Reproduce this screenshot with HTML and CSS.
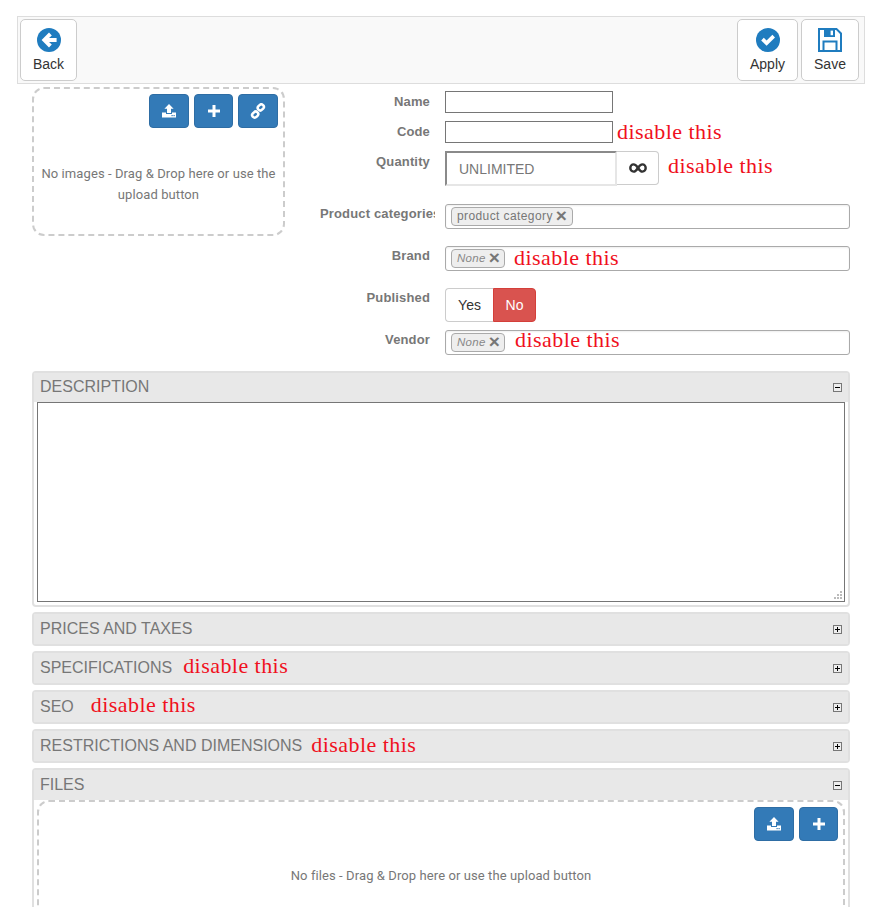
FILE: index.html
```html
<!DOCTYPE html>
<html lang="en">
<head>
<meta charset="utf-8">
<title>Product</title>
<link rel="stylesheet" href="styles.css">
</head>
<body>
<svg class="defs" width="0" height="0" aria-hidden="true">
  <symbol id="i-upload" viewBox="0 0 16 16">
    <path d="M8 1 L12.6 5.8 H10 V10 H6 V5.8 H3.4 Z" fill="#fff"/>
    <path d="M1 9.5 H5 V11 H11 V9.5 H15 V14.5 H1 Z" fill="#fff"/>
    <rect x="10.5" y="12" width="1.2" height="1.2" fill="#337ab7"/>
    <rect x="12.5" y="12" width="1.2" height="1.2" fill="#337ab7"/>
  </symbol>
  <symbol id="i-plus" viewBox="0 0 14 14">
    <path d="M5.5 1 H8.5 V5.5 H13 V8.5 H8.5 V13 H5.5 V8.5 H1 V5.5 H5.5 Z" fill="#fff"/>
  </symbol>
  <symbol id="i-link" viewBox="0 0 16 16">
    <g fill="none" stroke="#fff" stroke-width="2.5">
      <rect x="7.6" y="1.9" width="6.4" height="5" rx="2.4" transform="rotate(-45 10.8 4.4)"/>
      <rect x="2" y="9.1" width="6.4" height="5" rx="2.4" transform="rotate(-45 5.2 11.6)"/>
    </g>
  </symbol>
</svg>

<header class="toolbar">
  <button class="tool" type="button">
    <svg class="tool-icon" viewBox="0 0 24 24"><circle cx="12" cy="12" r="12" fill="#1f7cbf"/><path d="M4.6 12 L12 4.6 L14.8 7.4 L12 10 H19.6 V14 H12 L14.8 16.6 L12 19.4 Z" fill="#fff"/></svg>
    <span>Back</span>
  </button>
  <div class="spacer"></div>
  <button class="tool tool-apply" type="button">
    <svg class="tool-icon" viewBox="0 0 24 24"><circle cx="12" cy="12" r="12" fill="#1f7cbf"/><path d="M5.2 12.4 L7.8 9.8 L10.6 12.6 L16.4 6.8 L19 9.4 L10.6 17.8 Z" fill="#fff"/></svg>
    <span>Apply</span>
  </button>
  <button class="tool tool-save" type="button">
    <svg class="tool-icon" viewBox="0 0 24 24"><path d="M1 1 H18.5 L23 5.5 V23 H1 Z" fill="none" stroke="#1f7cbf" stroke-width="2"/><path d="M6 1 H17 V9 H6 Z" fill="#1f7cbf"/><rect x="12.6" y="2.6" width="2.4" height="4.6" fill="#fff"/><path d="M5.5 23 V13.5 H18.5 V23" fill="none" stroke="#1f7cbf" stroke-width="2"/></svg>
    <span>Save</span>
  </button>
</header>

<main class="content">
  <section class="top">
    <div class="drop drop-images">
      <div class="drop-actions">
        <button class="act" type="button"><svg class="act-icon" width="16" height="16"><use href="#i-upload"/></svg></button>
        <button class="act act-plus" type="button"><svg class="act-icon" width="14" height="14"><use href="#i-plus"/></svg></button>
        <button class="act" type="button"><svg class="act-icon" width="16" height="16"><use href="#i-link"/></svg></button>
      </div>
      <p class="drop-text">No images - Drag &amp; Drop here or use the upload button</p>
    </div>

    <form class="fields">
      <div class="row row-name">
        <label class="lbl">Name</label>
        <input class="txt" type="text">
      </div>
      <div class="row row-code">
        <label class="lbl">Code</label>
        <input class="txt" type="text">
        <span class="note note-code">disable this</span>
      </div>
      <div class="row row-qty">
        <label class="lbl">Quantity</label>
        <input class="qty" type="text" value="UNLIMITED">
        <button class="inf" type="button"><svg width="18" height="10" viewBox="0 0 18 10"><path d="M9 5 C7.5 2.6 6.2 1.4 4.6 1.4 C2.7 1.4 1.3 3 1.3 5 C1.3 7 2.7 8.6 4.6 8.6 C6.2 8.6 7.5 7.4 9 5 C10.5 2.6 11.8 1.4 13.4 1.4 C15.3 1.4 16.7 3 16.7 5 C16.7 7 15.3 8.6 13.4 8.6 C11.8 8.6 10.5 7.4 9 5 Z" fill="none" stroke="#333" stroke-width="2.4"/></svg></button>
        <span class="note note-qty">disable this</span>
      </div>
      <div class="row row-cat">
        <label class="lbl lbl-sel">Product categories</label>
        <div class="sel"><span class="chip chip-cat">product category <b class="x">×</b></span></div>
      </div>
      <div class="row row-brand">
        <label class="lbl lbl-sel">Brand</label>
        <div class="sel"><span class="chip"><i>None</i> <b class="x">×</b></span><span class="note note-brand">disable this</span></div>
      </div>
      <div class="row row-pub">
        <label class="lbl lbl-sel">Published</label>
        <div class="toggle"><span class="yes">Yes</span><span class="no">No</span></div>
      </div>
      <div class="row row-vendor">
        <label class="lbl lbl-sel">Vendor</label>
        <div class="sel"><span class="chip"><i>None</i> <b class="x">×</b></span><span class="note note-vendor">disable this</span></div>
      </div>
    </form>
  </section>

  <section class="panel">
    <div class="panel-head panel-head-desc"><h2>DESCRIPTION</h2><span class="tg tg-minus"></span></div>
    <div class="panel-body panel-body-desc">
      <textarea class="desc"></textarea>
      <svg class="grip" width="9" height="9" viewBox="0 0 9 9"><path d="M6 0h2v2H6zM3 3h2v2H3zM6 3h2v2H6zM0 6h2v2H0zM3 6h2v2H3zM6 6h2v2H6z" fill="#bbb"/></svg>
    </div>
  </section>
  <section class="panel">
    <div class="panel-head"><h2>PRICES AND TAXES</h2><span class="tg tg-plus"></span></div>
  </section>
  <section class="panel">
    <div class="panel-head"><h2>SPECIFICATIONS</h2><span class="note note-spec">disable this</span><span class="tg tg-plus"></span></div>
  </section>
  <section class="panel">
    <div class="panel-head"><h2>SEO</h2><span class="note note-seo">disable this</span><span class="tg tg-plus"></span></div>
  </section>
  <section class="panel">
    <div class="panel-head"><h2>RESTRICTIONS AND DIMENSIONS</h2><span class="note note-restr">disable this</span><span class="tg tg-plus"></span></div>
  </section>
  <section class="panel panel-files">
    <div class="panel-head"><h2>FILES</h2><span class="tg tg-minus"></span></div>
    <div class="panel-body">
      <div class="drop drop-files">
        <div class="drop-actions">
          <button class="act" type="button"><svg class="act-icon" width="16" height="16"><use href="#i-upload"/></svg></button>
          <button class="act act-plus" type="button"><svg class="act-icon" width="14" height="14"><use href="#i-plus"/></svg></button>
        </div>
        <p class="drop-text">No files - Drag &amp; Drop here or use the upload button</p>
      </div>
    </div>
  </section>
</main>
</body>
</html>
```
FILE: styles.css
```css
* { box-sizing: border-box; }
html, body { margin: 0; padding: 0; height: 907px; overflow: hidden; background: #fff; }
body { font-family: "Liberation Sans", Arial, sans-serif; font-size: 14px; color: #333; padding-top: 16px; }
.defs { position: absolute; }

.toolbar { display: flex; align-items: flex-start; gap: 3px; width: 848px; height: 68px; margin-left: 17px; padding: 2px 5px 2px 2px; background: #f9f9f9; border: 1px solid #ddd; }
.spacer { flex: 1; }
.tool { display: flex; flex-direction: column; align-items: center; width: 57px; height: 62px; padding: 8px 0 0; background: #fff; border: 1px solid #ccc; border-radius: 5px; font: 14px "Liberation Sans", Arial, sans-serif; color: #333; }
.tool-apply { width: 61px; }
.tool-save { width: 58px; }
.tool-icon { width: 24px; height: 24px; margin-bottom: 4px; }

.content { width: 818px; margin-left: 32px; }
.top { display: flex; height: 282px; }

.drop { border: 2px dashed #ccc; border-radius: 12px; background: #fff; }
.drop-images { flex: none; width: 253px; height: 149px; margin-top: 3px; padding: 5px; }
.drop-actions { display: flex; justify-content: flex-end; gap: 5px; }
.act { display: flex; align-items: center; justify-content: center; width: 40px; height: 34px; padding: 0; background: #337ab7; border: 1px solid #2e6da4; border-radius: 4px; }
.act-plus { width: 39px; }
.drop-text { margin: 0; text-align: center; font: 13px/21px Roboto, "Liberation Sans", sans-serif; letter-spacing: .09px; color: #777; }
.drop-images .drop-text { margin-top: 35px; }

.fields { flex: 1; margin-left: 35px; padding-top: 7px; }
.row { display: flex; align-items: flex-start; }
.row-code { margin-top: 8px; }
.row-qty { margin-top: 8px; }
.row-cat { margin-top: 18px; }
.row-brand, .row-pub { margin-top: 17px; }
.row-vendor { margin-top: 8px; }
.lbl { flex: none; width: 115px; padding-right: 5px; margin-right: 10px; overflow: hidden; white-space: nowrap; text-align: right; font: bold 13px/22px "Liberation Sans", Arial, sans-serif; letter-spacing: .15px; color: #777; }
.lbl-sel { line-height: 20px; }
.row-cat .lbl { text-align: left; }
.txt { width: 168px; height: 22px; padding: 0 4px; background: #fff; border: 1px solid #767676; }
.qty { width: 172px; height: 35px; padding: 0 12px; font: 14px "Liberation Sans", Arial, sans-serif; color: #777; background: #fff; border: 2px solid; border-color: #8a8a8a #e6e6e6 #e6e6e6 #8a8a8a; }
.inf { display: flex; align-items: center; justify-content: center; width: 42px; height: 34px; padding: 0; background: #fff; border: 1px solid #ccc; border-left: 0; border-radius: 0 4px 4px 0; }
.note { font: 22px/26px "Liberation Serif", "Times New Roman", serif; letter-spacing: .45px; color: #f01020; white-space: nowrap; }
.note-code { margin: -2px 0 -2px 4px; }
.note-qty { margin: 2px 0 0 9px; }
.note-brand { margin: -4px 0 0 9px; }
.note-vendor { margin: -6px 0 0 10px; }
.sel { display: flex; align-items: flex-start; width: 405px; height: 25px; padding: 2px 5px; background: #fff; border: 1px solid #aaa; border-radius: 3px; box-shadow: inset 0 1px 2px #eee; }
.chip { display: inline-flex; align-items: center; gap: 3px; width: 54px; height: 19px; padding: 0 0 1px 5px; background: #eee; border: 1px solid #aaa; border-radius: 4px; font: 11.5px "Liberation Sans", Arial, sans-serif; letter-spacing: .3px; color: #888; white-space: nowrap; }
.chip-cat { width: 122px; color: #777; letter-spacing: .4px; font-size: 12px; }
.x { font: bold 19px/14px "Liberation Sans", Arial, sans-serif; color: #777; letter-spacing: 0; }
.toggle { display: flex; height: 34px; font-size: 14px; line-height: 32px; text-align: center; }
.yes { width: 48px; background: #fff; border: 1px solid #ccc; border-right: 0; border-radius: 4px 0 0 4px; color: #333; }
.no { width: 43px; background: #d9534f; border: 1px solid #d43f3a; border-radius: 0 4px 4px 0; color: #fff; }

.panel { width: 818px; margin-top: 5px; background: #fff; border: 2px solid #e0e0e0; border-radius: 4px; }
.panel-head { display: flex; align-items: center; height: 30px; padding: 0 6px; background: #e8e8e8; }
.panel-head h2 { margin: 0; font: 16px "Liberation Sans", Arial, sans-serif; color: #777; }
.panel-head-desc { height: 29px; }
.panel-head-desc h2 { margin-bottom: 2px; }
.panel-body { padding: 0 3px 3px; }
.panel-body-desc { position: relative; }
.desc { display: block; width: 808px; height: 200px; padding: 2px; background: #fff; border: 1px solid #767676; resize: none; }
.grip { position: absolute; right: 5px; bottom: 5px; }
.tg { position: relative; width: 9px; height: 9px; margin-left: auto; border: 1px solid #777; background: #eee; }
.tg::before { content: ""; position: absolute; left: 1px; top: 3px; width: 5px; height: 1px; background: #000; }
.tg-plus::after { content: ""; position: absolute; left: 3px; top: 1px; width: 1px; height: 5px; background: #000; }
.note-spec { margin: 0 0 4px 11px; }
.note-seo { margin: 0 0 4px 17px; }
.note-restr { margin: 0 0 2px 9px; }
.panel-files .panel-body { padding-bottom: 0; }
.drop-files { width: 808px; height: 149px; padding: 5px; }
.drop-files .drop-text { margin-top: 24px; }
```
